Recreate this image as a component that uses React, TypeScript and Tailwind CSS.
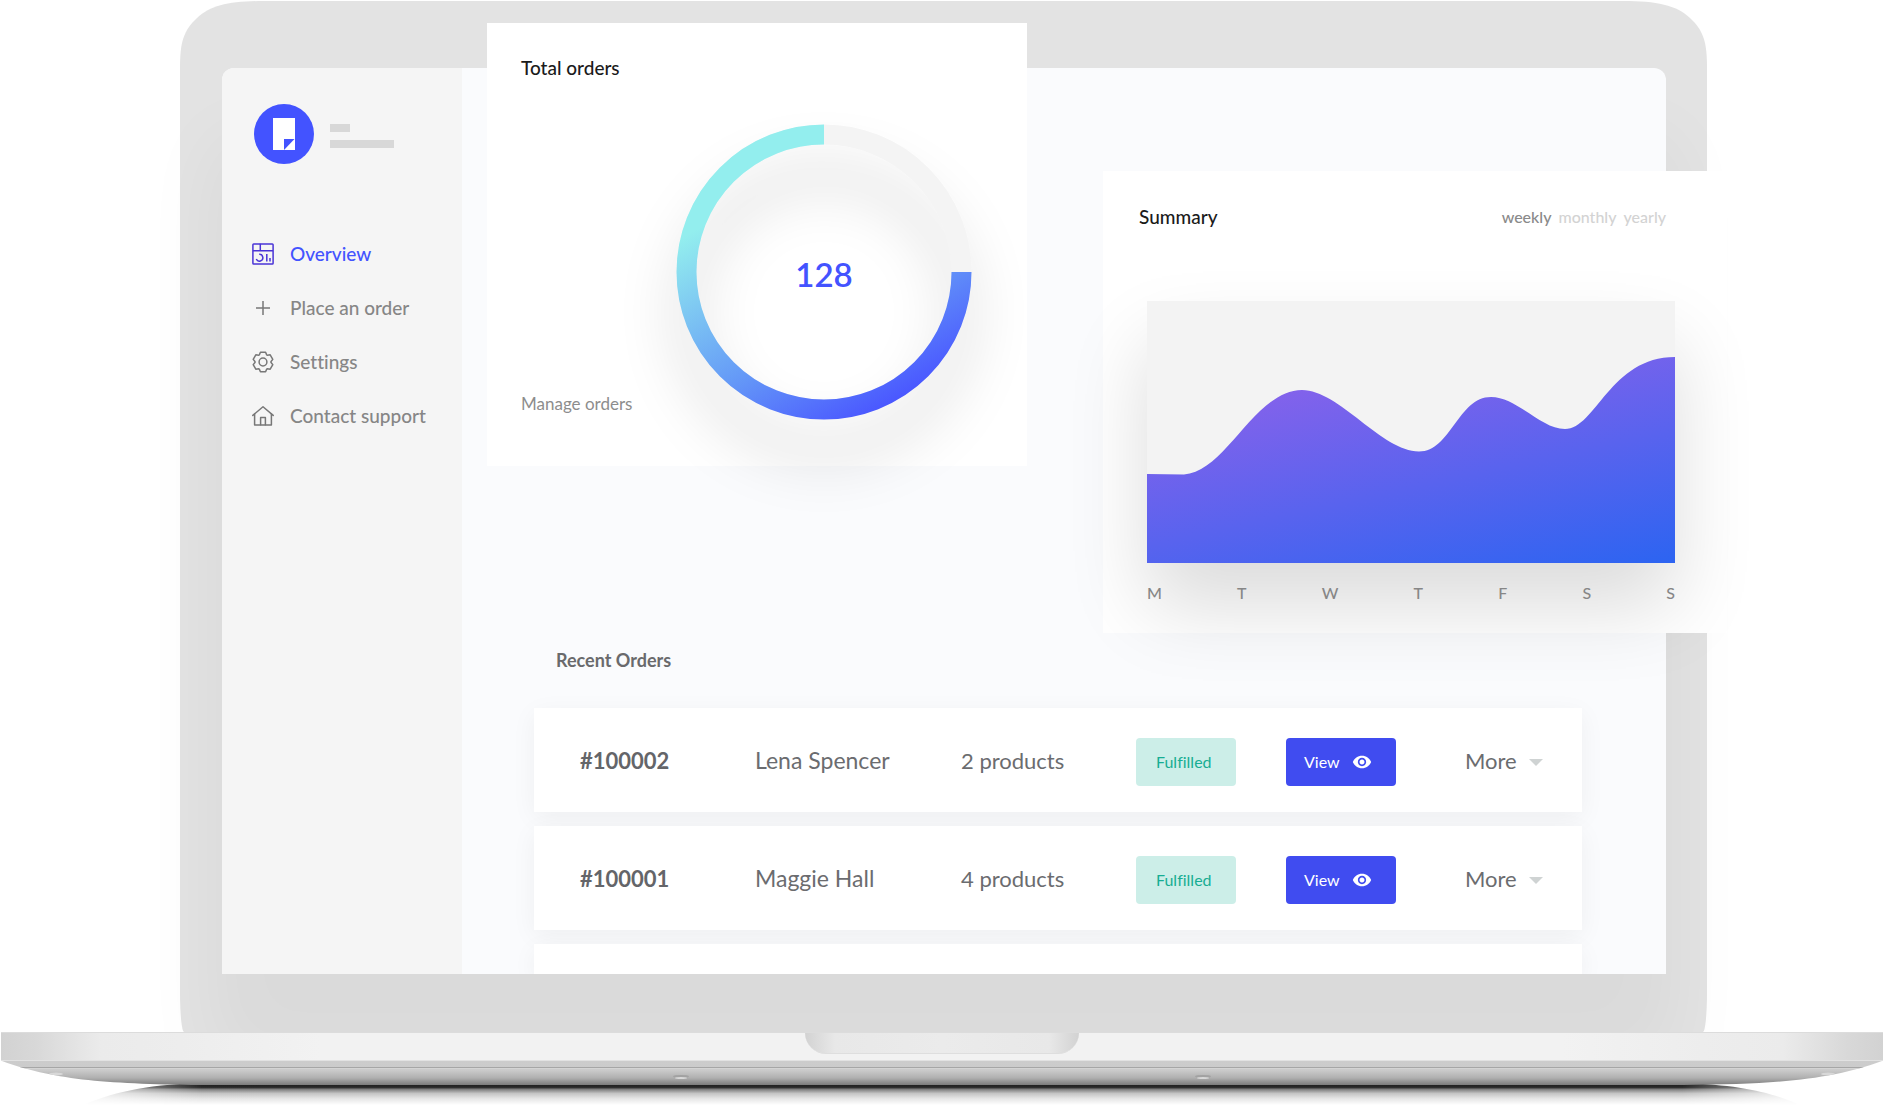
import React, { useState } from "react";
import { MdRemoveRedEye } from "react-icons/md";

interface IOrder {
    id: string;
    customer: string;
    products: string;
    status: string;
}

const orders: IOrder[] = [
    { id: "#100002", customer: "Lena Spencer", products: "2 products", status: "Fulfilled" },
    { id: "#100001", customer: "Maggie Hall", products: "4 products", status: "Fulfilled" },
];

const days = ["M", "T", "W", "T", "F", "S", "S"];
const ranges = ["weekly", "monthly", "yearly"];

const OverviewIcon = () => (
    <svg className="size-[22px] text-[#4a34d6]" viewBox="0 0 22 22" fill="none" stroke="currentColor" strokeWidth="1.5" aria-hidden="true">
        <rect x="0.9" y="0.9" width="20.2" height="20.2" rx="0.8" />
        <path d="M0.9 7.8H21M8.3 0.8V7.8" />
        <path d="M7.2 11.3a3.4 3.4 0 1 1-2.9 4.7" />
        <path d="M14.8 11v7.4M18 15v3.4" />
    </svg>
);

const PlusIcon = () => (
    <svg className="size-[22px] text-[#777777]" viewBox="0 0 22 22" fill="none" stroke="currentColor" strokeWidth="1.5" aria-hidden="true">
        <path d="M4 11h14M11 4v14" />
    </svg>
);

const GearIcon = () => (
    <svg className="size-[22px] text-[#777777]" viewBox="-11 -11 22 22" fill="none" stroke="currentColor" strokeWidth="1.5" strokeLinejoin="round" aria-hidden="true">
        <path d="M-3.6 -7.2L-2.6 -9.8H2.6L3.6 -7.2Q4 -6.7 4.44 -6.72L7.19 -7.15L9.79 -2.65L8.04 -0.48Q7.8 0 8.04 0.48L9.79 2.65L7.19 7.15L4.44 6.72Q4 6.7 3.6 7.2L2.6 9.8H-2.6L-3.6 7.2Q-4 6.7 -4.44 6.72L-7.19 7.15L-9.79 2.65L-8.04 0.48Q-7.8 0 -8.04 -0.48L-9.79 -2.65L-7.19 -7.15L-4.44 -6.72Q-4 -6.7 -3.6 -7.2Z" />
        <circle r="3.9" />
    </svg>
);

const HomeIcon = () => (
    <svg className="size-[22px] text-[#777777]" viewBox="0 0 22 22" fill="none" stroke="currentColor" strokeWidth="1.5" strokeLinecap="round" strokeLinejoin="round" aria-hidden="true">
        <path d="M0.8 10.4L11 1.8l10.2 8.6" />
        <path d="M2.6 9v11h16.8V9" />
        <path d="M8.6 19.8v-7.2h4.8v7.2" />
    </svg>
);

const navItems = [
    { label: "Overview", icon: <OverviewIcon /> },
    { label: "Place an order", icon: <PlusIcon /> },
    { label: "Settings", icon: <GearIcon /> },
    { label: "Contact support", icon: <HomeIcon /> },
];

const Sidebar = () => {
    return (
        <aside className="w-[240px] shrink-0 bg-[#f5f5f5] pt-9 pl-[30px]">
            <div className="flex items-center gap-4 pl-[2px]">
                <div className="size-[60px] rounded-full bg-[#4353ff] flex items-center justify-center">
                    <svg className="w-[22px] h-8" viewBox="0 0 22 32" aria-hidden="true">
                        <path d="M0 0H22V32H0Z" fill="#fff" />
                        <path d="M11 21H21.5L11 32Z" fill="#4353ff" />
                    </svg>
                </div>
                <div className="flex flex-col gap-2 pt-1">
                    <div className="w-5 h-2 bg-[#d8d8d8]"></div>
                    <div className="w-16 h-2 bg-[#d8d8d8]"></div>
                </div>
            </div>
            <nav className="mt-[78px] flex flex-col gap-[30px]">
                {
                    navItems.map((item, index) => (
                        <a
                            key={item.label}
                            href="#"
                            className={`flex items-center gap-4 text-[19px] leading-6 font-medium whitespace-nowrap ${index === 0 ? "text-[#4353ff]" : "text-[#868686]"}`}
                        >
                            {item.icon}
                            <span>{item.label}</span>
                        </a>
                    ))
                }
            </nav>
        </aside>
    );
};

const RecentOrders = () => {
    return (
        <section className="pt-[580px] pl-[72px] pr-[84px]">
            <h2 className="pl-[22px] text-[18px] leading-6 font-bold text-[#696a6c]">Recent Orders</h2>
            <table className="mt-[22px] -mb-[14px] w-full table-fixed border-separate border-spacing-x-0 border-spacing-y-[14px] text-[22px] text-[#6b6c6f]">
                <colgroup>
                    <col className="w-[221px]" />
                    <col className="w-[206px]" />
                    <col className="w-[175px]" />
                    <col className="w-[150px]" />
                    <col className="w-[179px]" />
                    <col />
                </colgroup>
                <tbody>
                    {
                        orders.map((order) => (
                            <tr key={order.id} className="h-[104px] bg-white shadow-[0_6px_24px_rgba(0,0,0,0.05)]">
                                <th scope="row" className="pl-[46px] text-left font-bold text-[#646569]">{order.id}</th>
                                <td className="text-[23px]">{order.customer}</td>
                                <td>{order.products}</td>
                                <td>
                                    <span className="mt-1 flex h-12 w-[100px] items-center rounded-[4px] bg-[#cceee8] pl-5 text-[16px] text-[#17ad93]">{order.status}</span>
                                </td>
                                <td>
                                    <button type="button" className="mt-1 flex h-12 w-[110px] items-center gap-3 rounded-[4px] bg-[#404cf0] pl-[18px] text-[16px] text-white">
                                        View
                                        <MdRemoveRedEye className="size-5" aria-hidden="true" />
                                    </button>
                                </td>
                                <td>
                                    <button type="button" className="flex items-center gap-3">
                                        More
                                        <svg className="mt-1 w-[14px] h-[7px]" viewBox="0 0 14 7" aria-hidden="true">
                                            <path d="M0 0H14L7 7Z" fill="#cfd3d3" />
                                        </svg>
                                    </button>
                                </td>
                            </tr>
                        ))
                    }
                    {/* next order, only its top edge is on the screen */}
                    <tr className="h-[30px] bg-white shadow-[0_6px_24px_rgba(0,0,0,0.05)]">
                        <td colSpan={6}></td>
                    </tr>
                </tbody>
            </table>
        </section>
    );
};

const TotalOrders = () => {
    return (
        <section className="absolute top-[-45px] left-[265px] w-[540px] bg-white px-[34px] pt-[33px] pb-[46px]">
            <h2 className="text-[19px] leading-6 font-medium text-[#1b1b1b]">Total orders</h2>
            <div className="mt-11 flex items-end justify-between pr-[21px]">
                <a href="#" className="pb-1 text-[17px] leading-6 text-[#8d8d8d]">Manage orders</a>
                <div className="relative size-[296px] flex items-center justify-center">
                    <svg className="absolute inset-0 size-full overflow-visible" viewBox="0 0 296 296" fill="none" aria-hidden="true">
                        <defs>
                            <linearGradient id="ring" gradientUnits="userSpaceOnUse" x1="98" y1="61" x2="221" y2="275">
                                <stop offset="0" stopColor="#93eeee" />
                                <stop offset="0.6" stopColor="#659af7" />
                                <stop offset="1" stopColor="#4a58ff" />
                            </linearGradient>
                            <filter id="ringShadow" x="-50%" y="-50%" width="200%" height="200%" colorInterpolationFilters="sRGB">
                                <feDropShadow dx="0" dy="40" stdDeviation="27" floodColor="#000" floodOpacity="0.16" />
                            </filter>
                        </defs>
                        <g strokeWidth="20" filter="url(#ringShadow)">
                            <circle cx="148" cy="148" r="137.5" stroke="#f4f4f4" />
                            <path d="M148 10.5A137.5 137.5 0 1 0 285.5 148" stroke="url(#ring)" />
                        </g>
                    </svg>
                    <span className="relative pt-1 text-[33px] leading-10 font-semibold text-[#4353ff]">128</span>
                </div>
            </div>
        </section>
    );
};

const Summary = () => {
    const [range, setRange] = useState("weekly");

    return (
        <section className="absolute top-[103px] right-[-61px] w-[624px] bg-white pt-[34px] pb-[28px] pl-9 pr-[52px]">
            <div className="flex items-center justify-between pr-[9px]">
                <h2 className="text-[19px] leading-6 font-medium text-[#1b1b1b]">Summary</h2>
                <div className="flex gap-[7px] text-[16px] leading-6 font-medium">
                    {
                        ranges.map((item) => (
                            <button
                                key={item}
                                type="button"
                                onClick={() => setRange(item)}
                                className={range === item ? "text-[#8a8a8a]" : "text-[#d3d3d3]"}
                            >
                                {item}
                            </button>
                        ))
                    }
                </div>
            </div>
            <div className="mt-[72px] ml-2 bg-[#f3f3f3] shadow-[0_44px_76px_rgba(0,0,0,0.14)]">
                <svg className="block h-[262px] w-full" viewBox="0 0 528 262" preserveAspectRatio="none" aria-hidden="true">
                    <defs>
                        <linearGradient id="area" gradientUnits="userSpaceOnUse" x1="24" y1="107" x2="80" y2="361">
                            <stop offset="0" stopColor="#8562eb" />
                            <stop offset="1" stopColor="#2c64f1" />
                        </linearGradient>
                    </defs>
                    <path
                        d="M0 173L37 173.5C78 172 108 89 155 89C192 89 235 150.5 272 150.5C304 150.5 311 96 344 96C370 96 394 128 418 128C449 128 463 56 528 56V262H0Z"
                        fill="url(#area)"
                    />
                </svg>
            </div>
            <div className="mt-[18px] ml-2 flex justify-between text-[16px] leading-6 font-medium text-[#868686]">
                {
                    days.map((day, index) => <span key={index}>{day}</span>)
                }
            </div>
        </section>
    );
};

const LidCorner = ({ className = "" }: { className?: string }) => (
    <svg className={`h-[67px] w-[84px] ${className}`} viewBox="0 0 84 67" aria-hidden="true">
        <path d="M0 67C0 42 3 30 17 17C31 4 50 0 84 0V67Z" fill="#e3e3e3" />
    </svg>
);

const LaptopBase = () => {
    return (
        <div className="relative px-px">
            <div className="flex h-[29px] justify-center border-t border-[#dcdcdc] border-b border-b-[#e2e2e2] bg-[linear-gradient(to_right,#d2d2d2_0,#d8d8d8_35px,#ebebeb_100px,#ededed_180px,#f2f2f2_320px,#f2f2f2_calc(100%-320px),#ededed_calc(100%-180px),#ebebeb_calc(100%-100px),#d8d8d8_calc(100%-35px),#d2d2d2_100%)]">
                <div className="h-[21px] w-[274px] rounded-b-[22px] border-b border-[#dedede] bg-[linear-gradient(to_right,#d2d2d2_0,#e8e8e8_30px,#ebebeb_50%,#e8e8e8_calc(100%-30px),#d2d2d2_100%)]"></div>
            </div>
            <svg className="block h-[45px] w-full" viewBox="0 0 1882 45" preserveAspectRatio="none" aria-hidden="true">
                <defs>
                    <linearGradient id="under" gradientUnits="userSpaceOnUse" x1="0" y1="0" x2="0" y2="24">
                        <stop offset="0" stopColor="#cccccc" />
                        <stop offset="0.38" stopColor="#cbcbcb" />
                        <stop offset="0.7" stopColor="#b0b0b0" />
                        <stop offset="1" stopColor="#7c7c7c" />
                    </linearGradient>
                    <linearGradient id="ground" gradientUnits="userSpaceOnUse" x1="0" y1="23" x2="0" y2="44">
                        <stop offset="0" stopColor="#1e1e1e" />
                        <stop offset="0.16" stopColor="#2a2a2a" />
                        <stop offset="0.26" stopColor="#808080" />
                        <stop offset="0.45" stopColor="#c4c4c4" />
                        <stop offset="0.7" stopColor="#e6e6e6" />
                        <stop offset="1" stopColor="#ffffff" />
                    </linearGradient>
                    <linearGradient id="fade" x1="0" y1="0" x2="1" y2="0">
                        <stop offset="0" stopColor="#fff" stopOpacity="0.2" />
                        <stop offset="0.07" stopColor="#fff" />
                        <stop offset="0.93" stopColor="#fff" />
                        <stop offset="1" stopColor="#fff" stopOpacity="0.2" />
                    </linearGradient>
                    <mask id="groundMask" maskUnits="userSpaceOnUse" x="0" y="0" width="1882" height="45">
                        <path d="M80 45C110 32 140 24 200 22H1682C1742 24 1772 32 1802 45Z" fill="url(#fade)" />
                    </mask>
                    <clipPath id="underClip">
                        <path d="M1 0C50 18 100 23 200 24H1682C1782 23 1832 18 1881 0Z" />
                    </clipPath>
                </defs>
                <rect x="60" y="22" width="1762" height="23" fill="url(#ground)" mask="url(#groundMask)" />
                <g clipPath="url(#underClip)">
                    <rect width="1882" height="24" fill="url(#under)" />
                    <rect y="6" width="1882" height="1" fill="#a6a6a6" />
                    <rect y="7" width="1882" height="1" fill="#d4d4d4" />
                    <g fill="#a2a2a2">
                        <ellipse cx="680" cy="15.5" rx="8" ry="1.6" />
                        <ellipse cx="1202" cy="15.5" rx="8" ry="1.6" />
                    </g>
                    <g fill="#d8d8d8">
                        <ellipse cx="680" cy="17" rx="6" ry="1" />
                        <ellipse cx="1202" cy="17" rx="6" ry="1" />
                        <ellipse cx="55" cy="13" rx="7" ry="1.4" />
                        <ellipse cx="1827" cy="13" rx="7" ry="1.4" />
                    </g>
                </g>
            </svg>
        </div>
    );
};

const App: React.FC = () => {
    return (
        <div className="overflow-hidden bg-white pt-px font-['Lato','Open_Sans',sans-serif] [font-variant-ligatures:none]">
            <div className="pl-[180px] pr-[177px]">
                <div className="flex">
                    <LidCorner />
                    <div className="flex-1 bg-[#e3e3e3]"></div>
                    <LidCorner className="-scale-x-100" />
                </div>
                <div className="bg-[#e3e3e3] pl-[42px] pr-[41px] pb-[58px] [border-radius:0_0_4px_4px/0_0_40px_40px]">
                    <div className="relative">
                        <div className="flex overflow-hidden rounded-t-[12px] bg-[#fafbfd] shadow-[0_80px_80px_10px_rgba(0,0,0,0.045)]">
                            <Sidebar />
                            <main className="flex-1">
                                <RecentOrders />
                            </main>
                        </div>
                        <TotalOrders />
                        <Summary />
                    </div>
                </div>
            </div>
            <LaptopBase />
        </div>
    );
};

export default App;
